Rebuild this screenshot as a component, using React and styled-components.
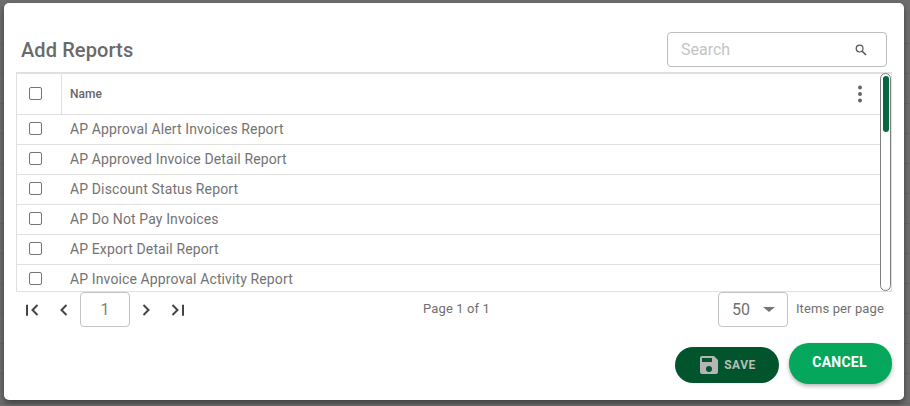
import React from 'react'
import styled, { createGlobalStyle } from 'styled-components'

const GlobalStyle = createGlobalStyle`
  html, body {
    margin: 0;
    padding: 0;
    background: #6e6e6e;
    font-family: Roboto, "Liberation Sans", sans-serif;
  }
`

const reports = [
  'AP Approval Alert Invoices Report',
  'AP Approved Invoice Detail Report',
  'AP Discount Status Report',
  'AP Do Not Pay Invoices',
  'AP Export Detail Report',
  'AP Invoice Approval Activity Report',
]

const Backdrop = styled.div`
  width: 910px;
  height: 406px;
  box-sizing: border-box;
  padding: 3px 6px 6px 4px;
  overflow: hidden;
  background: repeating-linear-gradient(to bottom, #6e6e6e 0, #6e6e6e 29px, #666 29px, #666 30px) 0 14px;
`

const Dialog = styled.div`
  width: 900px;
  height: 397px;
  box-sizing: border-box;
  padding: 28px 12px 0 12px;
  background: #fff;
  border-radius: 5px;
  box-shadow: 0 3px 6px rgba(0, 0, 0, 0.45);
`

const Header = styled.div`
  display: flex;
  align-items: center;
  justify-content: space-between;
  height: 37px;
  padding: 0 5px 0 5px;
  margin-bottom: 4px;
`

const Title = styled.h2`
  margin: 0;
  font-size: 20px;
  font-weight: 500;
  letter-spacing: 0.1px;
  color: #6a6a6a;
`

const SearchBox = styled.div`
  display: flex;
  align-items: center;
  justify-content: space-between;
  box-sizing: border-box;
  width: 220px;
  height: 35px;
  padding: 0 19px 0 13px;
  border: 1px solid #bdbdbd;
  border-radius: 4px;
  font-size: 16px;
  color: #c4c4c4;
`

const TableArea = styled.div`
  position: relative;
  width: 876px;
  height: 220px;
  box-sizing: border-box;
  border: 1px solid #e0e0e0;
  border-top: 2px solid #e0e0e0;
`

const Rows = styled.div`
  height: 100%;
  overflow: hidden;
`

const Row = styled.div`
  display: flex;
  align-items: center;
  height: ${p => (p.$head ? 41 : 30)}px;
  box-sizing: border-box;
  padding-bottom: 1px;
  border-bottom: 1px solid #e0e0e0;
`

const CheckCell = styled.div`
  display: flex;
  align-items: center;
  justify-content: center;
  width: 45px;
  height: ${p => (p.$head ? 40 : 29)}px;
  margin-bottom: -1px;
  flex: none;
  padding: 0 7px ${p => (p.$head ? 1 : 3)}px 0;
  box-sizing: border-box;
  border-right: ${p => (p.$head ? '1px solid #e0e0e0' : '1px solid transparent')};
`

const Check = styled.span`
  display: block;
  width: 11px;
  height: 11px;
  border: 1px solid #757575;
  border-radius: 2px;
`

const HeadName = styled.div`
  flex: 1;
  padding-left: 8px;
  font-size: 12px;
  font-weight: 500;
  color: #666;
`

const Name = styled.div`
  flex: 1;
  padding-left: 8px;
  font-size: 14px;
  letter-spacing: 0.12px;
  color: #737373;
`

const Dots = styled.svg`
  flex: none;
  width: 4px;
  height: 18px;
  margin-right: 29px;
`

const ScrollTrack = styled.div`
  position: absolute;
  top: -1px;
  right: 0;
  width: 11px;
  height: 218px;
  box-sizing: border-box;
  border: 1.5px solid #7d7d7d;
  border-radius: 6px;
  background: #fff;
  padding: 1.5px;
`

const ScrollThumb = styled.div`
  height: 56px;
  border-radius: 3px;
  background: #056b3e;
`

const Pager = styled.div`
  display: flex;
  align-items: center;
  height: 35px;
  padding-right: 8px;
`

const PagerLeft = styled.div`
  display: flex;
  align-items: center;
  flex: 1;
  padding-left: 7px;
`

const PageIcon = styled.svg`
  width: 18px;
  height: 18px;
  flex: none;
  margin-right: ${p => p.$gap || 0}px;
`

const PageInput = styled.div`
  display: flex;
  align-items: center;
  justify-content: center;
  box-sizing: border-box;
  width: 50px;
  height: 35px;
  margin-right: 7px;
  border: 1px solid #c4c4c4;
  border-radius: 4px;
  font-size: 16px;
  color: #808080;
`

const PageInfo = styled.div`
  flex: none;
  width: 182px;
  padding: 0 0 2px 6px;
  box-sizing: border-box;
  text-align: center;
  font-size: 13px;
  letter-spacing: 0.12px;
  color: #707070;
`

const PagerRight = styled.div`
  display: flex;
  align-items: center;
  justify-content: flex-end;
  flex: 1;
`

const SizeSelect = styled.div`
  display: flex;
  align-items: center;
  justify-content: space-between;
  box-sizing: border-box;
  width: 70px;
  height: 35px;
  padding: 0 12px 0 13px;
  border: 1px solid #c4c4c4;
  border-radius: 4px;
  font-size: 16px;
  color: #707070;
`

const Caret = styled.span`
  width: 0;
  height: 0;
  border-left: 6px solid transparent;
  border-right: 6px solid transparent;
  border-top: 5px solid #757575;
`

const ItemsLabel = styled.span`
  margin-left: 8px;
  padding-bottom: 2px;
  font-size: 13px;
  letter-spacing: 0.12px;
  color: #707070;
`

const Footer = styled.div`
  display: flex;
  align-items: center;
  justify-content: flex-end;
  gap: 10px;
  margin-top: 16px;
`

const Button = styled.button`
  display: flex;
  align-items: center;
  justify-content: center;
  gap: 6px;
  box-sizing: border-box;
  border: 0;
  padding: 0;
  border-radius: 20px;
  font-family: inherit;
  font-weight: 700;
  text-transform: uppercase;
`

const SaveButton = styled(Button)`
  width: 104px;
  height: 36px;
  margin-top: 2px;
  padding-left: 2px;
  background: #02542d;
  color: #b5bfb9;
  font-size: 12px;
  letter-spacing: 0.5px;
`

const CancelButton = styled(Button)`
  width: 103px;
  height: 41px;
  padding: 0 2px 3px 0;
  background: #05a75c;
  color: #fff;
  font-size: 14px;
  letter-spacing: 0.25px;
  box-shadow: 0 2px 4px rgba(0, 0, 0, 0.3);
`

const SearchIcon = () => (
  <svg width="12" height="12" viewBox="0 0 12 12" fill="none" stroke="#555" strokeWidth="1.2">
    <circle cx="4.6" cy="4.6" r="3.4" />
    <path d="M7.2 7.2 L11 11" strokeWidth="1.6" />
  </svg>
)

const SaveIcon = () => (
  <svg width="18" height="18" viewBox="3 3 18 18" fill="#b5b5b5">
    <path d="M17 3H5a2 2 0 0 0-2 2v14a2 2 0 0 0 2 2h14a2 2 0 0 0 2-2V7l-4-4zm-5 16a3 3 0 1 1 0-6 3 3 0 0 1 0 6zm3-10H5V5h10v4z" />
  </svg>
)

const Chevron = ({ d, gap }) => (
  <PageIcon $gap={gap} viewBox="0 0 18 18" fill="none" stroke="#444" strokeWidth="2">
    <path d={d} />
  </PageIcon>
)

export default function App() {
  return (
    <Backdrop>
      <GlobalStyle />
      <Dialog>
        <Header>
          <Title>Add Reports</Title>
          <SearchBox>
            Search
            <SearchIcon />
          </SearchBox>
        </Header>
        <TableArea>
          <Rows>
            <Row $head>
              <CheckCell $head><Check /></CheckCell>
              <HeadName>Name</HeadName>
              <Dots viewBox="0 0 4 18" fill="#666">
                <circle cx="2" cy="2.5" r="2" />
                <circle cx="2" cy="9" r="2" />
                <circle cx="2" cy="15.5" r="2" />
              </Dots>
            </Row>
            {reports.map(name => (
              <Row key={name}>
                <CheckCell><Check /></CheckCell>
                <Name>{name}</Name>
              </Row>
            ))}
          </Rows>
          <ScrollTrack><ScrollThumb /></ScrollTrack>
        </TableArea>
        <Pager>
          <PagerLeft>
            <Chevron gap={15} d="M4 3.8v11M14.5 4l-5 5 5 5" />
            <Chevron gap={6} d="M10.5 4l-5 5 5 5" />
            <PageInput>1</PageInput>
            <Chevron gap={14} d="M6.5 4l5 5-5 5" />
            <Chevron d="M3.5 4l5 5-5 5M14 3.8v11" />
          </PagerLeft>
          <PageInfo>Page 1 of 1</PageInfo>
          <PagerRight>
            <SizeSelect>50<Caret /></SizeSelect>
            <ItemsLabel>Items per page</ItemsLabel>
          </PagerRight>
        </Pager>
        <Footer>
          <SaveButton><SaveIcon />Save</SaveButton>
          <CancelButton>Cancel</CancelButton>
        </Footer>
      </Dialog>
    </Backdrop>
  )
}
